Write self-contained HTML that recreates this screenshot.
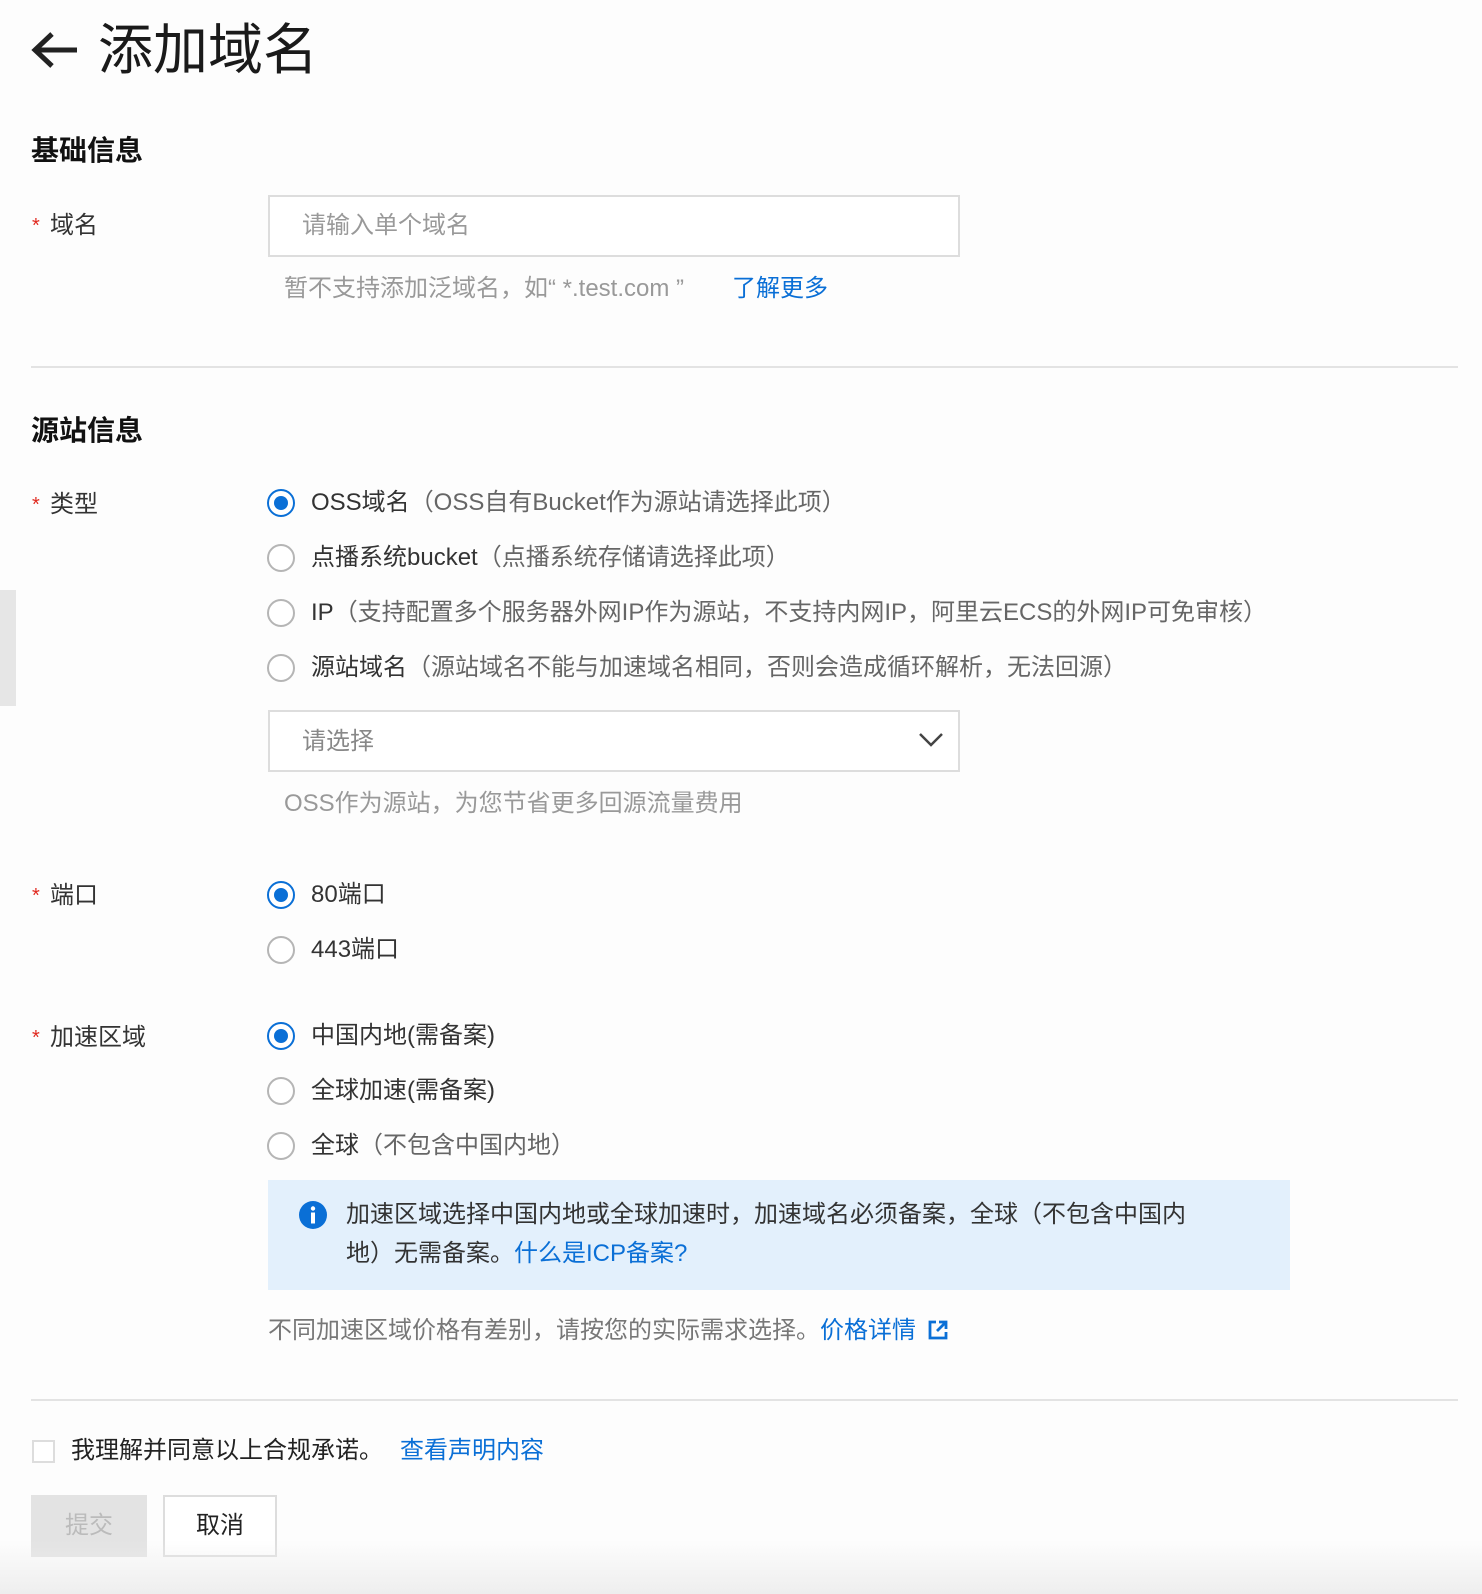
<!DOCTYPE html>
<html><head><meta charset="utf-8"><style>
*{margin:0;padding:0;box-sizing:border-box}
body{width:1482px;height:1594px;background:#fdfdfd;font-family:"Liberation Sans","Noto Sans CJK SC",sans-serif;color:#333;position:relative;overflow:hidden}
.a{position:absolute;white-space:nowrap;line-height:30px}
.lbl{font-size:24px;color:#333;left:50px}
.star{color:#e0281e;left:32px;font-size:20px}
.radio{position:absolute;left:267px;width:28px;height:28px;border:2px solid #b5b5b5;border-radius:50%;background:#fff}
.radio.on{border-color:#0a6fd6}
.radio.on:after{content:"";position:absolute;left:5px;top:5px;width:14px;height:14px;border-radius:50%;background:#0a6fd6}
.rt{left:311px;font-size:24px;color:#333}
.rt span{color:#666}
.hr{position:absolute;left:31px;right:24px;height:2px;background:#e3e3e3}
.blue{color:#0a6fd6}
</style></head><body>
<svg class="a" style="left:30px;top:30px" width="50" height="40" viewBox="0 0 50 40"><path d="M47 20H6M22 4L5 20l17 16" fill="none" stroke="#222" stroke-width="5"/></svg>
<div class="a" style="left:98px;top:20px;font-size:55px;line-height:60px;color:#1a1a1a">添加域名</div>
<div class="a" style="left:31px;top:136px;font-size:28px;font-weight:bold;color:#111">基础信息</div>
<div class="a star" style="top:211px">*</div><div class="a lbl" style="top:211px">域名</div>
<div class="a" style="left:268px;top:195px;width:692px;height:62px;border:2px solid #ddd;background:#fff"></div>
<div class="a" style="left:302px;top:211px;font-size:24px;color:#999">请输入单个域名</div>
<div class="a" style="left:284px;top:274px;font-size:24px;color:#999">暂不支持添加泛域名，如“ *.test.com ”</div>
<div class="a blue" style="left:732px;top:274px;font-size:24px">了解更多</div>
<div class="hr" style="top:366px"></div>
<div class="a" style="left:31px;top:416px;font-size:28px;font-weight:bold;color:#111">源站信息</div>
<div class="a star" style="top:490px">*</div><div class="a lbl" style="top:490px">类型</div>
<div class="radio on" style="top:489px"></div><div class="a rt" style="top:488px">OSS域名<span>（OSS自有Bucket作为源站请选择此项）</span></div>
<div class="radio" style="top:544px"></div><div class="a rt" style="top:543px">点播系统bucket<span>（点播系统存储请选择此项）</span></div>
<div class="radio" style="top:599px"></div><div class="a rt" style="top:598px">IP<span>（支持配置多个服务器外网IP作为源站，不支持内网IP，阿里云ECS的外网IP可免审核）</span></div>
<div class="radio" style="top:654px"></div><div class="a rt" style="top:653px">源站域名<span>（源站域名不能与加速域名相同，否则会造成循环解析，无法回源）</span></div>
<div class="a" style="left:0;top:590px;width:16px;height:116px;background:#e6e6e6"></div>
<div class="a" style="left:268px;top:710px;width:692px;height:62px;border:2px solid #ddd;background:#fff"></div>
<div class="a" style="left:302px;top:727px;font-size:24px;color:#888">请选择</div>
<svg class="a" style="left:918px;top:731px" width="26" height="16"><path d="M2 3l11 11L24 3" fill="none" stroke="#444" stroke-width="2.5"/></svg>
<div class="a" style="left:284px;top:789px;font-size:24px;color:#999">OSS作为源站，为您节省更多回源流量费用</div>
<div class="a star" style="top:881px">*</div><div class="a lbl" style="top:881px">端口</div>
<div class="radio on" style="top:881px"></div><div class="a rt" style="top:880px">80端口</div>
<div class="radio" style="top:936px"></div><div class="a rt" style="top:935px">443端口</div>
<div class="a star" style="top:1023px">*</div><div class="a lbl" style="top:1023px">加速区域</div>
<div class="radio on" style="top:1022px"></div><div class="a rt" style="top:1021px">中国内地(需备案)</div>
<div class="radio" style="top:1077px"></div><div class="a rt" style="top:1076px">全球加速(需备案)</div>
<div class="radio" style="top:1132px"></div><div class="a rt" style="top:1131px">全球<span>（不包含中国内地）</span></div>
<div class="a" style="left:268px;top:1180px;width:1022px;height:110px;background:#e3f0fc"></div>
<svg class="a" style="left:298px;top:1200px" width="30" height="30"><circle cx="15" cy="15" r="14" fill="#0a6fd6"/><circle cx="15" cy="8.5" r="2.2" fill="#fff"/><rect x="13" y="12.5" width="4" height="11" fill="#fff"/></svg>
<div class="a" style="left:346px;top:1200px;font-size:24px;color:#333">加速区域选择中国内地或全球加速时，加速域名必须备案，全球（不包含中国内</div>
<div class="a" style="left:346px;top:1239px;font-size:24px;color:#333">地）无需备案。<span class="blue">什么是ICP备案?</span></div>
<div class="a" style="left:268px;top:1316px;font-size:24px;color:#777">不同加速区域价格有差别，请按您的实际需求选择。<span class="blue">价格详情</span> <svg width="22" height="22" style="vertical-align:-3px;margin-left:4px"><path d="M9 3H3v16h16v-6M12 3h7v7M19 3l-9 9" fill="none" stroke="#0a6fd6" stroke-width="2.8"/></svg></div>
<div class="hr" style="top:1399px"></div>
<div class="a" style="left:32px;top:1440px;width:23px;height:23px;border:2px solid #ddd;background:#fff"></div>
<div class="a" style="left:71px;top:1436px;font-size:24px;color:#222">我理解并同意以上合规承诺。</div>
<div class="a blue" style="left:400px;top:1436px;font-size:24px">查看声明内容</div>
<div class="a" style="left:31px;top:1495px;width:116px;height:62px;background:#e3e3e3;color:#bbb;font-size:24px;text-align:center;line-height:62px">提交</div>
<div class="a" style="left:163px;top:1495px;width:114px;height:62px;border:2px solid #ddd;background:#fff;color:#222;font-size:24px;text-align:center;line-height:58px">取消</div>
<div class="a" style="left:0;top:1540px;width:1482px;height:54px;background:linear-gradient(#fdfdfd00,#eeeeee);pointer-events:none"></div>
</body></html>
